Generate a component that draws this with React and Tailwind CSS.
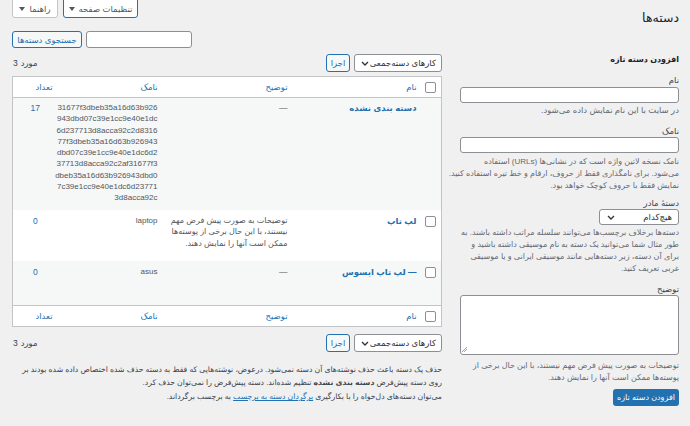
import React from "react";

function Tri() {
  return (
    <svg width="6" height="4" viewBox="0 0 6 4" className="shrink-0">
      <path d="M0 0 L6 0 L3 4 Z" fill="#50575e" />
    </svg>
  );
}

function Chevron() {
  return (
    <svg width="8" height="5" viewBox="0 0 8 5" className="shrink-0">
      <path d="M1 1 L4 4 L7 1" fill="none" stroke="#2c3338" strokeWidth="1.3" />
    </svg>
  );
}

function Box() {
  return <span className="block w-[11px] h-[11px] bg-white border border-[#8c8f94] rounded-[2px]" />;
}

function Count() {
  return (
    <span dir="ltr" className="flex gap-[3px] text-[#3c434a]">
      <span>3</span>
      <span>مورد</span>
    </span>
  );
}

function BulkNav() {
  return (
    <div className="flex justify-between items-center h-[18px]">
      <div className="flex gap-[4px]">
        <div className="w-[88px] h-[18px] bg-white border border-[#8c8f94] rounded-[3px] flex items-center justify-between pr-[5px] pl-[6px] text-[#2c3338]">
          <span>کارهای دسته‌جمعی</span>
          <Chevron />
        </div>
        <div className="w-[24px] h-[18px] border border-[#2271b1] text-[#2271b1] bg-[#f6f7f7] rounded-[3px] flex items-center justify-center">
          اجرا
        </div>
      </div>
      <Count />
    </div>
  );
}

const slugLines = [
  "31677f3dbeb35a16d63b926",
  "943dbd07c39e1cc9e40e1dc",
  "6d237713d8acca92c2d8316",
  "77f3dbeb35a16d63b926943",
  "dbd07c39e1cc9e40e1dc6d2",
  "37713d8acca92c2af31677f3",
  "dbeb35a16d63b926943dbd0",
  "7c39e1cc9e40e1dc6d23771",
  "3d8acca92c",
];

function HeadRow({ top }) {
  const b = top ? "border-b" : "border-t";
  return (
    <tr className={`h-[21px] bg-white ${b} border-[#c3c4c7]`}>
      <td className="pr-[5px] align-middle">
        <Box />
      </td>
      <td className="pr-[4px] text-right align-middle text-[#2271b1]">نام</td>
      <td className="pr-[5px] text-right align-middle text-[#2271b1]">توضیح</td>
      <td className="pr-[5px] text-right align-middle text-[#2271b1]">نامک</td>
      <td className="pr-[5px] text-right align-middle text-[#2271b1]">تعداد</td>
    </tr>
  );
}

export default function App() {
  return (
    <div
      dir="rtl"
      className="w-[690px] h-[426px] overflow-hidden bg-[#f0f0f1] text-[#3c434a] font-['Liberation_Sans','DejaVu_Sans',sans-serif] text-[8.5px] leading-[12px]"
    >
      <div className="pr-[11px] pl-[12px]">
        {/* header row */}
        <div className="flex justify-between items-start h-[31px]">
          <h1 className="mt-[10px] text-[12.5px] leading-[16px] font-normal text-[#1d2327]">دسته‌ها</h1>
          <div className="flex gap-[5px] -mt-px">
            <div className="h-[19px] w-[75px] bg-white border border-[#2271b1] rounded-b-[3px] text-[#50575e] flex items-center justify-center gap-[4px]">
              <span>تنظیمات صفحه</span>
              <Tri />
            </div>
            <div className="h-[19px] w-[46px] bg-white border border-[#c3c4c7] rounded-b-[3px] text-[#50575e] flex items-center justify-center gap-[4px]">
              <span>راهنما</span>
              <Tri />
            </div>
          </div>
        </div>

        {/* search row */}
        <div className="flex justify-end gap-[4px] h-[17px]">
          <div className="w-[106px] h-[17px] bg-white border border-[#8c8f94] rounded-[3px]" />
          <div className="w-[70px] h-[17px] border border-[#2271b1] text-[#2271b1] bg-[#f6f7f7] rounded-[3px] flex items-center justify-center">
            جستجوی دسته‌ها
          </div>
        </div>

        {/* columns */}
        <div className="flex gap-[18px] mt-[6px]">
          {/* form column */}
          <div className="w-[219px] shrink-0">
            <h2 className="font-bold text-[8px] leading-[12px] text-[#1d2327]">افزودن دسته تازه</h2>

            <div className="mt-[8px]">
              <div className="leading-[12px] text-[#3c434a]">نام</div>
              <div className="mt-[1px] h-[16px] bg-white border border-[#8c8f94] rounded-[3px]" />
              <p className="mt-[1px] text-[#646970]">در سایت با این نام نمایش داده می‌شود.</p>
            </div>

            <div className="mt-[10px]">
              <div className="leading-[11px] text-[#3c434a]">نامک</div>
              <div className="h-[16px] bg-white border border-[#8c8f94] rounded-[3px]" />
              <p className="mt-[3px] text-[8px] whitespace-nowrap text-[#646970]">
                نامک نسخه لاتین واژه است که در نشانی‌ها (URLs) استفاده
                <br />
                می‌شود. برای نامگذاری فقط از حروف، ارقام و خط تیره استفاده کنید.
                <br />
                نمایش فقط با حروف کوچک خواهد بود.
              </p>
            </div>

            <div className="mt-[6px]">
              <div className="leading-[11px] text-[#3c434a]">دستهٔ مادر</div>
              <div className="w-[80px] h-[16px] bg-white border border-[#8c8f94] rounded-[3px] flex items-center justify-between pr-[6px] pl-[7px] text-[#2c3338]">
                <span>هیچ‌کدام</span>
                <Chevron />
              </div>
              <p className="mt-[2px] text-[8px] whitespace-nowrap text-[#646970]">
                دسته‌ها برخلاف برچسب‌ها می‌توانند سلسله مراتب داشته باشند. به
                <br />
                طور مثال شما می‌توانید یک دسته به نام موسیقی داشته باشید و
                <br />
                برای آن دسته، زیر دسته‌هایی مانند موسیقی ایرانی و یا موسیقی
                <br />
                غربی تعریف کنید.
              </p>
            </div>

            <div className="mt-[8px]">
              <div className="leading-[12px] text-[#3c434a]">توضیح</div>
              <div className="relative h-[60px] bg-white border border-[#8c8f94] rounded-[3px]">
                <svg width="6" height="6" viewBox="0 0 6 6" className="absolute left-[1px] bottom-[1px]">
                  <path d="M0 5 L5 0 M2 5 L5 2" stroke="#8c8f94" strokeWidth="0.8" />
                </svg>
              </div>
              <p className="mt-[5px] text-[8px] whitespace-nowrap leading-[11.5px] text-[#646970]">
                توضیحات به صورت پیش فرض مهم نیستند، با این حال برخی از
                <br />
                پوسته‌ها ممکن است آنها را نمایش دهند.
              </p>
            </div>

            <div className="mt-[6px] w-[66px] h-[17px] bg-[#2271b1] text-white text-[8px] rounded-[3px] flex items-center justify-center">
              افزودن دسته تازه
            </div>
          </div>

          {/* table column */}
          <div className="w-[429px] shrink-0">
            <BulkNav />

            <table className="mt-[4px] w-[429px] table-fixed border-collapse border border-[#c3c4c7] bg-white">
              <colgroup>
                <col className="w-[21px]" />
                <col className="w-[128px]" />
                <col className="w-[130px]" />
                <col className="w-[105px]" />
                <col className="w-[45px]" />
              </colgroup>
              <thead>
                <HeadRow top />
              </thead>
              <tbody>
                <tr className="h-[112px] bg-[#f6f7f7] align-top">
                  <td />
                  <td className="pr-[4px] pt-[4px] text-right">
                    <span className="font-bold text-[8.5px] text-[#2271b1]">دسته بندی نشده</span>
                  </td>
                  <td className="pr-[5px] pt-[4px] text-right text-[#50575e]">—</td>
                  <td className="pr-[5px] pt-[4px] text-right text-[#50575e] text-[8px] leading-[11.25px]">
                    {slugLines.map((l) => (
                      <div key={l}>{l}</div>
                    ))}
                  </td>
                  <td className="pt-[4px] text-center text-[#2271b1]">17</td>
                </tr>
                <tr className="h-[51px] bg-white align-top">
                  <td className="pr-[5px] pt-[6px]">
                    <Box />
                  </td>
                  <td className="pr-[4px] pt-[5px] text-right">
                    <span className="font-bold text-[8.5px] text-[#2271b1]">لپ تاپ</span>
                  </td>
                  <td className="pr-[5px] pt-[5px] text-right text-[#50575e] text-[8px] whitespace-nowrap leading-[11.7px]">
                    توضیحات به صورت پیش فرض مهم
                    <br />
                    نیستند، با این حال برخی از پوسته‌ها
                    <br />
                    ممکن است آنها را نمایش دهند.
                  </td>
                  <td className="pr-[5px] pt-[5px] text-right text-[#50575e] text-[8px]">laptop</td>
                  <td className="pt-[5px] text-center text-[#2271b1]">0</td>
                </tr>
                <tr className="h-[45px] bg-[#f6f7f7] align-top">
                  <td className="pr-[5px] pt-[6px]">
                    <Box />
                  </td>
                  <td className="pr-[4px] pt-[5px] text-right">
                    <span className="font-bold text-[8.5px] text-[#2271b1]">— لپ تاپ ایسوس</span>
                  </td>
                  <td className="pr-[5px] pt-[5px] text-right text-[#50575e]">—</td>
                  <td className="pr-[5px] pt-[5px] text-right text-[#50575e] text-[8px]">asus</td>
                  <td className="pt-[5px] text-center text-[#2271b1]">0</td>
                </tr>
              </tbody>
              <tfoot>
                <HeadRow />
              </tfoot>
            </table>

            <div className="mt-[7px]">
              <BulkNav />
            </div>

            <div className="mt-[11px] text-[7.7px] leading-[13px] whitespace-nowrap text-[#3c434a]">
              <p>
                حذف یک دسته باعث حذف نوشته‌های آن دسته نمی‌شود. درعوض، نوشته‌هایی که فقط به دسته حذف شده اختصاص داده شده بودند بر
                <br />
                روی دسته پیش‌فرض <strong className="font-bold">دسته بندی نشده</strong> تنظیم شده‌اند. دسته پیش‌فرض را نمی‌توان حذف کرد.
              </p>
              <p className="mt-[1px]">
                می‌توان دسته‌های دل‌خواه را با بکارگیری{" "}
                <span className="text-[#2271b1] underline">برگردان دسته به برچسب</span> به برچسب برگرداند.
              </p>
            </div>
          </div>
        </div>
      </div>
    </div>
  );
}
